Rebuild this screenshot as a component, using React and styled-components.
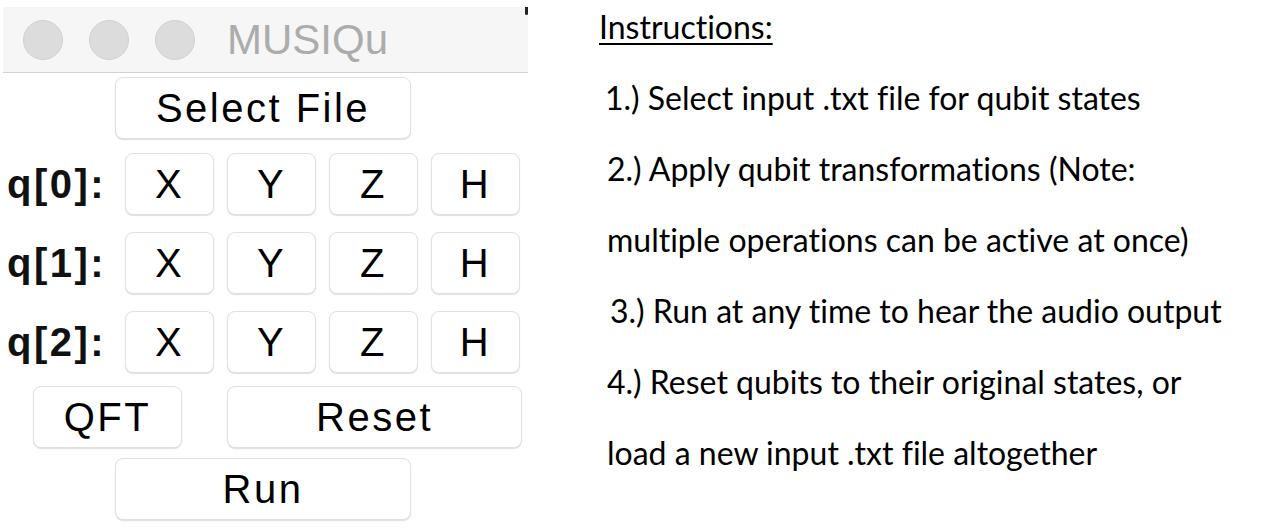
import React from "react";
import styled, { createGlobalStyle } from "styled-components";

const GlobalStyle = createGlobalStyle`
  html, body {
    margin: 0;
    padding: 0;
    background: #fff;
  }
  body {
    font-family: "Liberation Sans", Arial, sans-serif;
    color: #000;
  }
`;

const Page = styled.div`
  display: flex;
  align-items: flex-start;
  padding: 7px 0 0 3px;
  width: 1280px;
  height: 523px;
  box-sizing: border-box;
  overflow: hidden;
`;

const Window = styled.div`
  width: 525px;
  display: flex;
  flex-direction: column;
`;

const TitleBar = styled.div`
  position: relative;
  height: 65px;
  background: #f6f6f6;
  border-bottom: 1px solid #d2d2d2;
  display: flex;
  align-items: center;
  padding-left: 20px;
  &::after {
    content: "";
    position: absolute;
    right: 0;
    top: 0;
    width: 3px;
    height: 8px;
    background: #222;
    border-radius: 0 0 2px 2px;
  }
`;

const Light = styled.span`
  width: 38px;
  height: 38px;
  border-radius: 50%;
  background: #dcdcdc;
  border: 1px solid #d0d0d0;
  margin-right: 26px;
`;

const WindowTitle = styled.span`
  font-family: "Liberation Sans", Arial, sans-serif;
  font-size: 42px;
  color: #acacac;
  margin-left: 6px;
  margin-top: 1px;
`;

const Row = styled.div`
  display: flex;
  align-items: center;
  margin-top: ${(p) => p.$top}px;
  padding-left: ${(p) => p.$left}px;
  gap: ${(p) => p.$gap || 0}px;
`;

const Button = styled.button`
  width: ${(p) => p.$w}px;
  height: 62px;
  box-sizing: border-box;
  background: #fff;
  border: 1px solid #e1e1e1;
  border-radius: 8px;
  box-shadow: 0 1px 1px rgba(0, 0, 0, 0.13);
  font-family: "Liberation Sans", Arial, sans-serif;
  font-size: 40px;
  letter-spacing: 2.5px;
  color: #000;
  padding: 0;
  display: flex;
  align-items: center;
  justify-content: center;
`;

const QubitLabel = styled.span`
  width: 105px;
  font-family: "Liberation Sans", Arial, sans-serif;
  font-weight: bold;
  font-size: 40px;
  letter-spacing: 2.5px;
  white-space: nowrap;
  color: #111;
`;

const Instructions = styled.div`
  margin-left: 71px;
  margin-top: -7px;
  font-family: Lato, "Liberation Sans", sans-serif;
  font-size: 32px;
  font-variant-ligatures: none;
  color: #000;
`;

const Heading = styled.div`
  line-height: 48px;
  margin-top: 3px;
  margin-bottom: 11px;
  text-decoration: underline;
  text-underline-offset: 4px;
  text-decoration-thickness: 2px;
`;

const Line = styled.div`
  line-height: 71px;
  padding-left: ${(p) => p.$indent}px;
  white-space: nowrap;
`;

const gates = ["X", "Y", "Z", "H"];
const lines = [
  { text: "1.) Select input .txt file for qubit states", indent: 6 },
  { text: "2.) Apply qubit transformations (Note:", indent: 8 },
  { text: "multiple operations can be active at once)", indent: 8 },
  { text: "3.) Run at any time to hear the audio output", indent: 11 },
  { text: "4.) Reset qubits to their original states, or", indent: 8 },
  { text: "load a new input .txt file altogether", indent: 8 },
];

export default function App() {
  return (
    <>
      <GlobalStyle />
      <Page>
        <Window>
          <TitleBar>
            <Light />
            <Light />
            <Light />
            <WindowTitle>MUSIQu</WindowTitle>
          </TitleBar>
          <Row $top={4} $left={112}>
            <Button $w={296}>Select File</Button>
          </Row>
          {[0, 1, 2].map((q, i) => (
            <Row key={q} $top={i === 0 ? 14 : 17} $left={4} $gap={13}>
              <QubitLabel>q[{q}]:</QubitLabel>
              {gates.map((g) => (
                <Button key={g} $w={89}>
                  {g}
                </Button>
              ))}
            </Row>
          ))}
          <Row $top={13} $left={30} $gap={45}>
            <Button $w={149}>QFT</Button>
            <Button $w={295}>Reset</Button>
          </Row>
          <Row $top={10} $left={112}>
            <Button $w={296}>Run</Button>
          </Row>
        </Window>
        <Instructions>
          <Heading>Instructions:</Heading>
          {lines.map((l) => (
            <Line key={l.text} $indent={l.indent}>
              {l.text}
            </Line>
          ))}
        </Instructions>
      </Page>
    </>
  );
}
